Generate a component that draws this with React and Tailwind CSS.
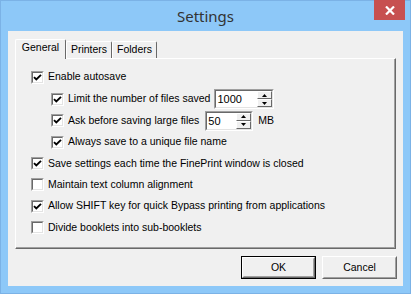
import React from 'react';

const font = { fontFamily: '"Liberation Sans", Arial, sans-serif' };

function Check() {
  return (
    <svg width="9" height="9" viewBox="0 0 9 9">
      <path d="M1 4.2 L3.3 6.5 L8 1.8" fill="none" stroke="#000" strokeWidth="1.9" />
    </svg>
  );
}

function Box({ checked }) {
  return (
    <span className="flex w-[13px] h-[13px] shrink-0 border border-t-[#a0a0a0] border-l-[#a0a0a0] border-r-white border-b-white">
      <span className="flex flex-1 items-center justify-center bg-white border border-t-[#696969] border-l-[#696969] border-r-[#e3e3e3] border-b-[#e3e3e3]">
        {checked && <Check />}
      </span>
    </span>
  );
}

function Arrow({ up }) {
  return (
    <svg width="5" height="3" viewBox="0 0 5 3">
      {up ? <path d="M2.5 0 L5 3 L0 3 Z" fill="#000" /> : <path d="M0 0 L5 0 L2.5 3 Z" fill="#000" />}
    </svg>
  );
}

function SpinBtn({ up }) {
  return (
    <div className="flex flex-1 items-center justify-center bg-[#f0f0f0] border border-t-white border-l-white border-r-[#696969] border-b-[#696969]">
      <Arrow up={up} />
    </div>
  );
}

function Spin({ value, w }) {
  return (
    <div className={`flex h-[20px] ${w} border border-t-[#a0a0a0] border-l-[#a0a0a0] border-r-white border-b-white`}>
      <div className="flex flex-1 bg-white border border-t-[#696969] border-l-[#696969] border-r-[#e3e3e3] border-b-[#e3e3e3]">
        <span className="flex-1 pl-[1px] text-[11px] leading-[16px] text-black">{value}</span>
        <div className="flex flex-col w-[15px]">
          <SpinBtn up />
          <SpinBtn />
        </div>
      </div>
    </div>
  );
}

function Row({ checked, label, h, indent, children }) {
  return (
    <div className={`flex items-center ${h} ${indent ? 'pl-[20px]' : ''}`}>
      <Box checked={checked} />
      <span className="ml-[4px] whitespace-nowrap">{label}</span>
      {children}
    </div>
  );
}

function Button({ label, isDefault }) {
  return (
    <div className={`flex w-[75px] h-[23px] ${isDefault ? 'border border-[#000]' : ''}`}>
      <div className="flex flex-1 border border-t-white border-l-white border-r-[#696969] border-b-[#696969]">
        <div className="flex flex-1 items-center justify-center bg-[#f0f0f0] border border-t-[#f0f0f0] border-l-[#f0f0f0] border-r-[#a0a0a0] border-b-[#a0a0a0]">
          {label}
        </div>
      </div>
    </div>
  );
}

export default function App() {
  return (
    <div className="flex flex-col w-[411px] h-[294px] bg-[#8dc8f8] border border-[#7bb2e6] text-[10.5px] text-black" style={font}>
      <div className="grid grid-cols-[1fr_auto_1fr] h-[30px]">
        <div />
        <div className="flex items-center justify-center text-[15px] text-[#333333]" style={{ fontFamily: '"Noto Sans", sans-serif' }}>
          Settings
        </div>
        <div className="flex justify-end pr-[5px]">
          <div className="flex items-center justify-center w-[31px] h-[20px] -mt-px bg-[#c75050]">
            <svg width="10" height="9" viewBox="0 0 10 9">
              <path d="M1 0.5 L9 8.5 M9 0.5 L1 8.5" stroke="#fff" strokeWidth="2.2" />
            </svg>
          </div>
        </div>
      </div>

      <div className="flex flex-1 px-[7px] pb-[7px]">
        <div className="flex flex-col flex-1 bg-[#f0f0f0] pt-[8px] px-[7px]">
          <div className="relative z-10 flex items-end h-[20px] -mb-px">
            <div className="flex items-center justify-center w-[51px] h-[20px] pb-[3px] bg-[#f0f0f0] border-l border-t border-r border-l-white border-t-white border-r-[#696969] rounded-t-[2px]">
              General
            </div>
            <div className="flex items-center justify-center w-[46px] h-[17px] mb-px bg-[#f0f0f0] border-l border-t border-r border-l-white border-t-white border-r-[#696969] rounded-t-[2px]">
              Printers
            </div>
            <div className="flex items-center justify-center w-[45px] h-[17px] mb-px bg-[#f0f0f0] border-l border-t border-r border-l-white border-t-white border-r-[#696969] rounded-t-[2px]">
              Folders
            </div>
          </div>

          <div className="flex w-[381px] h-[191px] border border-t-white border-l-white border-r-[#696969] border-b-[#696969]">
            <div className="flex flex-col flex-1 pt-[7px] pl-[15px] border-r border-b border-r-[#a0a0a0] border-b-[#a0a0a0]">
              <Row checked label="Enable autosave" h="h-[22px]" />
              <Row checked indent label="Limit the number of files saved" h="h-[22px]">
                <div className="ml-[4px]">
                  <Spin value="1000" w="w-[60px]" />
                </div>
              </Row>
              <Row checked indent label="Ask before saving large files" h="h-[21px]">
                <div className="ml-[6px]">
                  <Spin value="50" w="w-[48px]" />
                </div>
                <span className="ml-[5px]">MB</span>
              </Row>
              <Row checked indent label="Always save to a unique file name" h="h-[22px]" />
              <Row checked label="Save settings each time the FinePrint window is closed" h="h-[21px]" />
              <Row label="Maintain text column alignment" h="h-[21px]" />
              <Row checked label="Allow SHIFT key for quick Bypass printing from applications" h="h-[22px]" />
              <Row label="Divide booklets into sub-booklets" h="h-[21px]" />
            </div>
          </div>

          <div className="flex justify-end gap-[6px] mt-[7px] -mr-px">
            <Button label="OK" isDefault />
            <Button label="Cancel" />
          </div>
        </div>
      </div>
    </div>
  );
}
